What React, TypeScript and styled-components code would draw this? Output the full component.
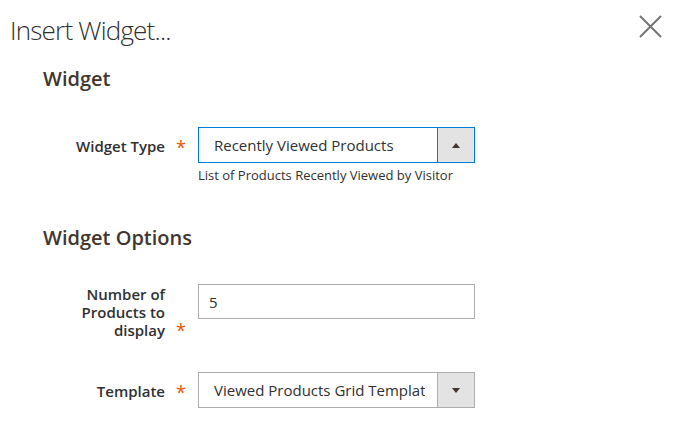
import styled, { createGlobalStyle } from "styled-components";

const GlobalStyle = createGlobalStyle`
  html, body {
    margin: 0;
    padding: 0;
    background: #ffffff;
  }
  body {
    font-family: "Open Sans", "Liberation Sans", sans-serif;
    color: #303030;
  }
`;

type ArrowDir = "up" | "down";

const CloseIcon = () => (
  <svg width="23" height="23" viewBox="0 0 23 23" fill="none">
    <path d="M1 1 L22 22 M22 1 L1 22" stroke="#757575" strokeWidth="2" />
  </svg>
);

const Field = ({
  label,
  multiline,
  children,
}: {
  label: React.ReactNode;
  multiline?: boolean;
  children: React.ReactNode;
}) => (
  <Row>
    <Label $multiline={multiline}>{label}</Label>
    <Required $multiline={multiline}>*</Required>
    <Control>{children}</Control>
  </Row>
);

const Select = ({
  value,
  arrow,
  focused,
}: {
  value: string;
  arrow: ArrowDir;
  focused?: boolean;
}) => (
  <SelectBox $focused={focused}>
    <SelectValue>{value}</SelectValue>
    <ArrowBox $focused={focused}>
      <Triangle $dir={arrow} />
    </ArrowBox>
  </SelectBox>
);

const App = () => {
  return (
    <>
      <GlobalStyle />
      <Modal>
        <Header>
          <Title>Insert Widget...</Title>
          <CloseButton aria-label="Close">
            <CloseIcon />
          </CloseButton>
        </Header>

        <Content>
          <Fieldset>
            <Legend>Widget</Legend>
            <Field label="Widget Type">
              <Select value="Recently Viewed Products" arrow="up" focused />
              <Note>List of Products Recently Viewed by Visitor</Note>
            </Field>
          </Fieldset>

          <Fieldset $options>
            <Legend $tight>Widget Options</Legend>
            <Field
              multiline
              label={
                <>
                  Number of
                  <br />
                  Products to
                  <br />
                  display
                </>
              }
            >
              <Input type="text" defaultValue="5" />
            </Field>
            <Spacer />
            <Field label="Template">
              <Select value="Viewed Products Grid Template" arrow="down" />
            </Field>
          </Fieldset>
        </Content>
      </Modal>
    </>
  );
};

export default App;

const Modal = styled.div`
  width: 685px;
  height: 434px;
  overflow: hidden;
  background: #ffffff;
`;

const Header = styled.div`
  display: flex;
  justify-content: space-between;
  align-items: flex-start;
  padding: 15px 23px 0 10px;
`;

const Title = styled.h1`
  margin: 0;
  font-size: 26px;
  line-height: 31px;
  font-weight: 300;
  letter-spacing: -0.8px;
  color: #303030;
`;

const CloseButton = styled.button`
  display: flex;
  padding: 0;
  border: none;
  background: transparent;
  width: 23px;
  height: 23px;
  cursor: pointer;
`;

const Content = styled.div`
  padding: 21px 0 0 43px;
`;

const Fieldset = styled.div<{ $options?: boolean }>`
  display: flex;
  flex-direction: column;
  margin-top: ${({ $options }) => ($options ? "42px" : "0")};
`;

const Legend = styled.h2<{ $tight?: boolean }>`
  margin: 0 0 ${({ $tight }) => ($tight ? "34px" : "36px")};
  font-size: 20px;
  line-height: 24px;
  font-weight: 600;
  color: #41362f;
`;

const Row = styled.div`
  display: grid;
  grid-template-columns: 122px 33px 277px;
  align-items: start;
`;

const Label = styled.label<{ $multiline?: boolean }>`
  text-align: right;
  font-size: 15px;
  line-height: 18px;
  font-weight: 600;
  color: #303030;
  padding-top: ${({ $multiline }) => ($multiline ? "1px" : "10px")};
`;

const Required = styled.span<{ $multiline?: boolean }>`
  color: #eb5202;
  font-size: 18px;
  font-weight: 400;
  line-height: 18px;
  padding-left: 11px;
  padding-top: ${({ $multiline }) => ($multiline ? "37px" : "11px")};
`;

const Control = styled.div`
  display: flex;
  flex-direction: column;
`;

const SelectBox = styled.div<{ $focused?: boolean }>`
  display: flex;
  height: 36px;
  box-sizing: border-box;
  border: 1px solid ${({ $focused }) => ($focused ? "#007bdb" : "#adadad")};
  background: #ffffff;
`;

const SelectValue = styled.div`
  flex: 1;
  min-width: 0;
  display: flex;
  align-items: center;
  margin: 0 12px 0 15px;
  font-size: 15px;
  color: #303030;
  white-space: nowrap;
  overflow: hidden;
`;

const ArrowBox = styled.div<{ $focused?: boolean }>`
  width: 36px;
  flex: none;
  display: flex;
  align-items: center;
  justify-content: center;
  background: #e3e3e3;
  border-left: 1px solid ${({ $focused }) => ($focused ? "#007bdb" : "#adadad")};
`;

const Triangle = styled.span<{ $dir: ArrowDir }>`
  width: 0;
  height: 0;
  border-left: 4px solid transparent;
  border-right: 4px solid transparent;
  ${({ $dir }) =>
    $dir === "up"
      ? "border-bottom: 5px solid #41362f;"
      : "border-top: 5px solid #41362f;"}
`;

const Note = styled.div`
  margin-top: 3px;
  font-size: 13px;
  line-height: 18px;
  color: #303030;
`;

const Input = styled.input`
  box-sizing: border-box;
  width: 277px;
  height: 35px;
  margin: 0;
  padding: 0 10px;
  border: 1px solid #adadad;
  border-radius: 0;
  font-family: "Open Sans", "Liberation Sans", sans-serif;
  font-size: 15px;
  color: #303030;
  background: #ffffff;
  outline: none;
`;

const Spacer = styled.div`
  height: 33px;
`;
